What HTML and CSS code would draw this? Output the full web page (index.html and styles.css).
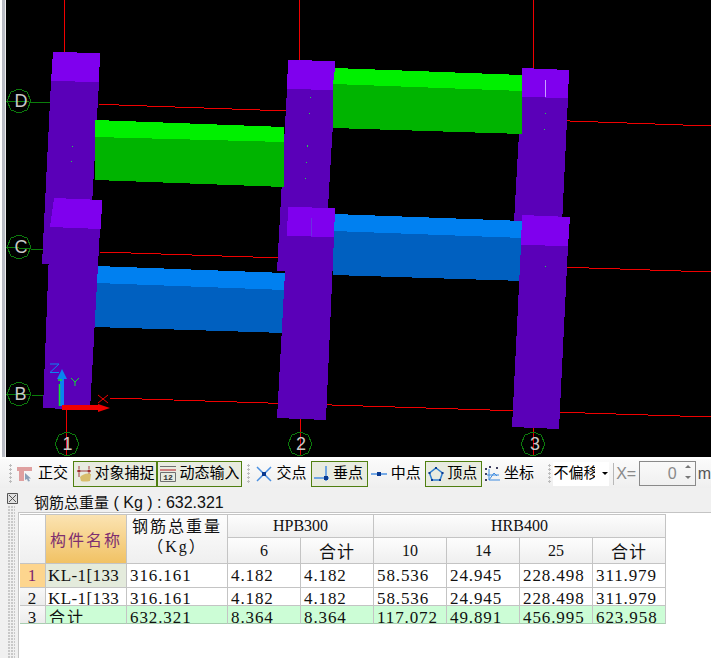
FILE: index.html
```html
<!DOCTYPE html>
<html lang="zh-CN">
<head>
<meta charset="utf-8">
<title>钢筋总重量</title>
<link rel="stylesheet" href="styles.css">
</head>
<body>
<div class="view">
  <div class="view-edge"></div>
  <svg class="scene" viewBox="6 0 705 457" shape-rendering="crispEdges">
    <g class="red-line">
      <path d="M64.500 0V52M299.500 0V60M533.500 0V68M66.500 410V450M300.500 418V432M533.500 427V432"/>
      <path d="M99 104.300L711 126M100 252L711 272M110 398L711 417"/>
    </g>
    <g class="grid-green">
      <path d="M6 101.500L52 102.500M6 247L44 250M6 394L44 395.500"/>
      <path d="M66.500 432V456M300.500 432V456M533.500 432V456" class="red-stem"/>
    </g>
    <g class="bubble">
      <polygon points="19,89 27,92 31,101 27,110 19,113 11,110 7,101 11,92"/>
      <polygon points="19,235 27,238 31,247 27,256 19,259 11,256 7,247 11,238"/>
      <polygon points="19,382 27,385 31,394 27,403 19,406 11,403 7,394 11,385"/>
      <polygon points="67,432 75,435 79,444 75,453 67,456 59,453 55,444 59,435"/>
      <polygon points="300,432 308,435 312,444 308,453 300,456 292,453 288,444 292,435"/>
      <polygon points="533,432 541,435 545,444 541,453 533,456 525,453 521,444 525,435"/>
    </g>
    <g class="col-dark">
      <polygon points="51,81 99,82 92,205 92,264 42,264"/>
      <polygon points="287,89 335,90 328,207 328,272 277,271"/>
      <polygon points="521,97 568,98 562,225 514,222"/>
    </g>
    <g class="col-light">
      <polygon points="53,52 100,53 99,82 51,81"/>
      <polygon points="288,60 335,61 334,90 287,89"/>
      <polygon points="522,68 569,70 568,98 521,97"/>
    </g>
    <polygon class="g-light" points="95,120 284,127 284,142 95,137"/>
    <polygon class="g-dark" points="95,137 284,142 284,187 95,180"/>
    <polygon class="g-light" points="335,68 522,75 522,91 333,84"/>
    <polygon class="g-dark" points="333,84 522,91 522,134 333,128"/>
    <polygon class="b-light" points="97,266 285,273 285,290 96,283"/>
    <polygon class="b-dark" points="96,283 285,290 285,333 94,327"/>
    <polygon class="b-light" points="335,214 523,221 523,238 333,231"/>
    <polygon class="b-dark" points="333,231 523,238 523,281 333,275"/>
    <g class="col-dark">
      <polygon points="50,227 100,229 90,410 43,408"/>
      <polygon points="287,236 334,237 326,420 277,418"/>
      <polygon points="521,245 568,246 559,429 512,427"/>
    </g>
    <g class="col-light">
      <polygon points="54,198 102,200 101,229 50,227"/>
      <polygon points="288,207 335,208 334,237 287,236"/>
      <polygon points="522,215 570,217 568,246 521,245"/>
    </g>
    <path class="seam" d="M545.500 80V97"/>
    <path class="seam-dim" d="M311.500 218V236"/>
    <g class="speck">
      <rect x="310" y="97" width="1" height="1"/><rect x="309" y="113" width="1" height="1"/>
      <rect x="307" y="145" width="1" height="2"/><rect x="306" y="162" width="1" height="1"/>
      <rect x="305" y="178" width="1" height="1"/><rect x="72" y="146" width="1" height="1"/>
      <rect x="71" y="161" width="1" height="1"/><rect x="545" y="113" width="1" height="1"/>
      <rect x="544" y="129" width="1" height="1"/><rect x="545" y="266" width="1" height="1"/>
    </g>
    <g class="axes" shape-rendering="auto">
      <path class="axis-z" d="M60 406V379H57L62 369L67 379H64V406Z"/>
      <path class="axis-x" d="M62 405H98V404L110 408L98 412V410H62Z"/>
      <path class="axis-y" d="M59.500 384V406M58 380H62"/>
      <path class="letter-z" d="M50 364H59L50 372.500H59"/>
      <path class="letter-y" d="M71 378L75 382L79 378M75 382V386"/>
      <path class="letter-x" d="M98 395L108 403M108 395L98 403"/>
    </g>
    <g class="bubble-text">
      <text x="21" y="107">D</text>
      <text x="21" y="253">C</text>
      <text x="20.500" y="400">B</text>
      <text x="67.500" y="450">1</text>
      <text x="301" y="450">2</text>
      <text x="535" y="450">3</text>
    </g>
  </svg>
</div>

<div class="toolbar">
  <div class="grip"></div>
  <div class="tool w-zj">
    <svg class="ico" viewBox="0 0 16 16"><path class="i-pink" d="M0 1H15V5H7V15H2V5H0Z"/><path class="i-cursor" d="M8 7L14 12.500L11.500 12.500L13 15L11 15.500L10 13L8 14Z"/></svg>
    <span>正交</span>
  </div>
  <div class="tool on w-dx">
    <svg class="ico" viewBox="0 0 16 16"><path class="i-red" d="M3 0V3M3 7V11M13 0V3M13 7V9M1 5H15"/><circle class="i-dot" cx="3" cy="5" r="1.500"/><circle class="i-dot" cx="13" cy="5" r="1.500"/><path class="i-gold" d="M4 11Q9 6 15 8L14 15Q8 16 5 15Z"/></svg>
    <span>对象捕捉</span>
  </div>
  <div class="tool on w-dt">
    <svg class="ico" viewBox="0 0 16 16"><rect class="i-band" x="0" y="3" width="16" height="2"/><path class="i-box" d="M0 .500H16M.500 6.500H15.500V15.500H.500Z"/><text class="i-12" x="8" y="14">12</text></svg>
    <span>动态输入</span>
  </div>
  <div class="grip g2"></div>
  <div class="tool w-jd">
    <svg class="ico" viewBox="0 0 16 16"><path class="i-blue" d="M1 1L15 15M15 1L1 15"/><rect class="i-node" x="6" y="6" width="4" height="4"/></svg>
    <span>交点</span>
  </div>
  <div class="tool on w-cd">
    <svg class="ico" viewBox="0 0 16 16"><path class="i-blue" d="M0 12H15M12 0V15"/><rect class="i-node" x="10" y="10" width="4" height="4"/></svg>
    <span>垂点</span>
  </div>
  <div class="tool w-zd">
    <svg class="ico" viewBox="0 0 16 16"><path class="i-blue" d="M0 8H16"/><rect class="i-node" x="6" y="6" width="4" height="4"/></svg>
    <span>中点</span>
  </div>
  <div class="tool on w-dd">
    <svg class="ico" viewBox="0 0 16 16"><path class="i-penta" d="M8 2L14.500 7L12 14H4L1.500 7Z"/><path class="i-corners" d="M7 2h2M.500 7h2M13.500 7h2M3 14h2M11 14h2"/></svg>
    <span>顶点</span>
  </div>
  <div class="tool w-zb">
    <svg class="ico" viewBox="0 0 16 16"><path class="i-blue-thin" d="M5 3V14H16M5 14L10 7L13 10M3 9H15"/><path class="i-dots" d="M1 3h2M1 14h2M12 2h2M1 8h2M5 1h2"/></svg>
    <span>坐标</span>
  </div>
  <div class="grip g3"></div>
  <div class="combo"><span class="combo-text">不偏移</span><span class="combo-arrow"></span></div>
  <div class="vsep"></div>
  <span class="x-label">X=</span>
  <div class="spin"><span>0</span><i class="spin-btns"><b class="up"></b><b class="down"></b></i></div>
  <span class="unit">m</span>
</div>

<div class="panel">
  <div class="dock">
    <svg class="dock-close" viewBox="0 0 11 11"><path class="dock-x" d="M.500 .500H10.500V10.500H.500ZM2 2L9 9M9 2L2 9"/></svg>
    <div class="dock-dots"></div>
  </div>
  <div class="panel-main">
    <div class="panel-title">钢筋总重量<span class="title-val"> ( Kg ) : 632.321</span></div>
    <div class="panel-content">
      <table class="grid">
        <colgroup>
          <col class="c-num"><col class="c-name"><col class="c-total">
          <col class="c-v"><col class="c-v"><col class="c-v"><col class="c-v"><col class="c-v"><col class="c-v">
        </colgroup>
        <tr class="r-h1">
          <th rowspan="2" class="hd"></th>
          <th rowspan="2" class="hd-name">构件名称</th>
          <th rowspan="2" class="hd hd-total">钢筋总重量<br>（Kg）</th>
          <th colspan="2" class="hd">HPB300</th>
          <th colspan="4" class="hd">HRB400</th>
        </tr>
        <tr class="r-h2">
          <th class="hd">6</th><th class="hd wide">合计</th><th class="hd">10</th><th class="hd">14</th><th class="hd">25</th><th class="hd wide">合计</th>
        </tr>
        <tr class="r-a">
          <td class="num num-on"><div>1</div></td><td class="name-on name"><div>KL-1[133</div></td><td><div>316.161</div></td><td><div>4.182</div></td><td><div>4.182</div></td><td><div>58.536</div></td><td><div>24.945</div></td><td><div>228.498</div></td><td><div>311.979</div></td>
        </tr>
        <tr class="r-b r-2">
          <td class="num"><div>2</div></td><td class="name"><div>KL-1[133</div></td><td><div>316.161</div></td><td><div>4.182</div></td><td><div>4.182</div></td><td><div>58.536</div></td><td><div>24.945</div></td><td><div>228.498</div></td><td><div>311.979</div></td>
        </tr>
        <tr class="r-b sum">
          <td class="num"><div>3</div></td><td class="cjk"><div>合计</div></td><td><div>632.321</div></td><td><div>8.364</div></td><td><div>8.364</div></td><td><div>117.072</div></td><td><div>49.891</div></td><td><div>456.995</div></td><td><div>623.958</div></td>
        </tr>
      </table>
    </div>
  </div>
</div>
</body>
</html>
```

FILE: styles.css
```css
html, body {
  margin: 0;
  padding: 0;
  height: 658px;
  overflow: hidden;
  background: #fff;
  font-family: "Noto Sans CJK SC", "Liberation Sans", sans-serif;
}

/* 3D view */
.view { display: flex; height: 457px; }
.view-edge {
  width: 6px;
  box-sizing: border-box;
  background: #fff;
  border-left: 2px solid #fff;
  border-right: 1px solid #eee;
  background-image: linear-gradient(#b9bcc4, #b9bcc4);
}
.scene { width: 705px; height: 457px; background: #000; display: block; }
.red-line path { stroke: #f00000; stroke-width: 1; fill: none; }
.grid-green path { stroke: #0a7d0a; stroke-width: 1; fill: none; }
.grid-green .red-stem { stroke: #e00000; }
.bubble polygon { fill: none; stroke: #0c7a0c; stroke-width: 1; }
.bubble-text text {
  font: 400 18px "Liberation Sans", sans-serif;
  fill: #c8c8c8;
  text-anchor: middle;
}
.col-dark polygon { fill: #5a00b8; }
.col-light polygon { fill: #7f00ee; }
.g-light { fill: #00f000; }
.g-dark { fill: #00b400; }
.b-light { fill: #0080f0; }
.b-dark { fill: #0060c0; }
.seam { stroke: #c9a0ff; stroke-width: 1; fill: none; }
.seam-dim { stroke: #6a30e0; stroke-width: 1; fill: none; }
.speck rect { fill: #22d050; }
.axis-z { fill: #0a84f0; }
.axis-x { fill: #f00000; }
.axis-y { stroke: #10e030; stroke-width: 1.500; fill: none; }
.letter-z { stroke: #0a84f0; stroke-width: 1; fill: none; }
.letter-y { stroke: #10e030; stroke-width: 1; fill: none; }
.letter-x { stroke: #f00000; stroke-width: 1; fill: none; }

/* toolbar */
.toolbar {
  display: flex;
  align-items: center;
  height: 29px;
  margin-top: 2px;
  padding-left: 9px;
  background: linear-gradient(#fbfbfb, #efefef);
  font-size: 15px;
  line-height: 20px;
  color: #000;
}
.grip {
  width: 4px;
  height: 20px;
  margin-right: 4px;
  background-image: radial-gradient(circle at 1.500px 1.500px, #bdbdbd 1.300px, transparent 1.400px);
  background-size: 4px 4px;
}
.g2 { margin-left: 5px; margin-right: 4px; }
.g3 { margin-left: 9px; margin-right: 1px; }
.tool {
  display: flex;
  align-items: center;
  gap: 4px;
  height: 26px;
  box-sizing: border-box;
  white-space: nowrap;
}
.tool span { margin-bottom: 3px; }
.tool.on {
  background: #e8ebe0;
  border: 1px solid #4f7f0f;
  padding-left: 2px;
  gap: 3px;
}
.ico { width: 16px; height: 16px; flex: none; }
.w-zj { width: 58px; gap: 5px; margin-right: -1px; }
.w-dx { width: 87px; }
.w-dt { width: 87px; }
.w-jd { width: 57px; margin-left: 1px; }
.w-cd { width: 58px; margin-left: -1px; padding-left: 2px; }
.w-zd { width: 56px; margin-left: 3px; }
.w-dd { width: 58px; }
.w-zb { width: 56px; margin-left: 2px; }
.i-pink { fill: #dfa0a0; }
.i-cursor { fill: #8aa0b8; }
.i-red { stroke: #a04040; stroke-width: 1; fill: none; }
.i-dot { fill: #a03030; }
.i-gold { fill: #d8bd6c; }
.i-box { stroke: #707070; stroke-width: 1; fill: none; }
.i-band { fill: #d08080; }
.i-12 { font: 700 8px "Liberation Mono", monospace; fill: #333; text-anchor: middle; }
.i-blue { stroke: #4a90e2; stroke-width: 1.500; fill: none; }
.i-blue-thin { stroke: #3f8be0; stroke-width: 1; fill: none; }
.i-dots { stroke: #404060; stroke-width: 2; fill: none; }
.i-node { fill: #0a3a90; }
.i-penta { stroke: #2f7fd0; stroke-width: 1.500; fill: none; }
.i-corners { stroke: #0a3a90; stroke-width: 2; fill: none; }
.combo {
  display: flex;
  width: 58px;
  height: 24px;
  background: #fff;
  align-items: center;
  box-sizing: border-box;
  padding-left: 1px;
  overflow: hidden;
}
.combo-text { flex: none; width: 41px; overflow: hidden; white-space: nowrap; margin-bottom: 3px; }
.combo-arrow {
  margin-left: 7px;
  border-left: 3px solid transparent;
  border-right: 3px solid transparent;
  border-top: 3px solid #000;
}
.vsep { width: 1px; height: 22px; background: #b8b8b8; margin-left: 4px; }
.x-label { width: 23px; margin-left: 2px; color: #8a8a8a; font: 16px "Liberation Sans", sans-serif; }
.spin {
  position: relative;
  display: flex;
  align-items: center;
  justify-content: flex-end;
  width: 58px;
  height: 25px;
  box-sizing: border-box;
  border: 1px solid #8a8a8a;
  padding-right: 18px;
  color: #8a8a8a;
  font: 16px "Liberation Sans", sans-serif;
}
.spin-btns { position: absolute; right: 4px; top: 3px; display: flex; flex-direction: column; gap: 8px; }
.up, .down { display: block; border-left: 3px solid transparent; border-right: 3px solid transparent; }
.up { border-bottom: 3px solid #777; }
.down { border-top: 3px solid #777; }
.unit { margin-left: 2px; color: #555; font: 16px "Liberation Sans", sans-serif; }

/* bottom panel */
.panel { display: flex; height: 170px; background: #f0f0f0; }
.dock { width: 18px; flex: none; padding-top: 5px; box-sizing: border-box; }
.dock-close { display: block; width: 11px; height: 11px; margin-left: 7px; }
.dock-x { stroke: #555; stroke-width: 1; fill: #e0e0e0; }
.dock-dots {
  width: 7px;
  height: 160px;
  margin: 2px 0 0 8px;
  background-image: radial-gradient(circle at 1px 1px, #c8c8c8 1px, transparent 1.100px);
  background-size: 3px 3px;
}
.panel-main { flex: 1; display: flex; flex-direction: column; }
.panel-title {
  height: 25px;
  box-sizing: border-box;
  padding-left: 16px;
  border-bottom: 1px solid #c4c4c4;
  font-size: 15px;
  line-height: 28px;
  color: #111;
  white-space: pre;
}
.title-val { font: 16px "Liberation Sans", sans-serif; }
.panel-content {
  flex: 1;
  background: #fff;
  border-left: 1px solid #c4c4c4;
  padding: 1px 0 0 1px;
}
.grid {
  table-layout: fixed;
  width: 646px;
  border-collapse: separate;
  border-spacing: 0;
  border-top: 1px solid #c4c4c4;
  font: 17px "Liberation Serif", "Noto Sans CJK SC", serif;
  color: #111;
}
.c-num { width: 26px; }
.c-name { width: 81px; }
.c-total { width: 101px; }
.c-v { width: 73px; }
.grid th, .grid td {
  padding: 0;
  border-right: 1px solid #c4c4c4;
  border-bottom: 1px solid #c4c4c4;
  font-weight: 400;
}
.grid td { vertical-align: top; }
.r-h1 { height: 23px; }
.r-h2 { height: 24px; }
.r-b { height: 18px; }
.hd { background: linear-gradient(#fdfdfd, #efefef); font-size: 16px; text-align: center; }
.grid .wide { font-size: 17px; letter-spacing: 1px; }
.hd-total { letter-spacing: 2px; line-height: 20px; padding-bottom: 4px !important; }
.hd-name {
  background: linear-gradient(#fbe3b2, #f1c264);
  color: #7e2f70;
  font-size: 16px;
  letter-spacing: 2px;
  text-align: center;
}
.grid td div {
  line-height: 24px;
  overflow: hidden;
  white-space: nowrap;
  padding-left: 3px;
  letter-spacing: .9px;
}
.r-a td div { height: 23px; }
.r-b td div { height: 17px; }
.r-2 td div { line-height: 22px; }
.grid td.name div { padding-left: 2px; letter-spacing: .4px; }
.r-a td { background: #fff; }
.num { background: linear-gradient(#f8f8f8, #ececec); text-align: center; }
.grid td.num div { padding-left: 0; }
.grid td.num-on { background: #fdd58e; color: #7e1f70; }
.grid td.name-on { background: #e4ebdc; }
.sum td { background: #ccfdd6; border-bottom-color: #a8cdb0; }
.sum td.num { background: linear-gradient(#f8f8f8, #ececec); }
.grid .cjk { font-size: 16px; }
.grid .cjk div { letter-spacing: 2px; }
```
